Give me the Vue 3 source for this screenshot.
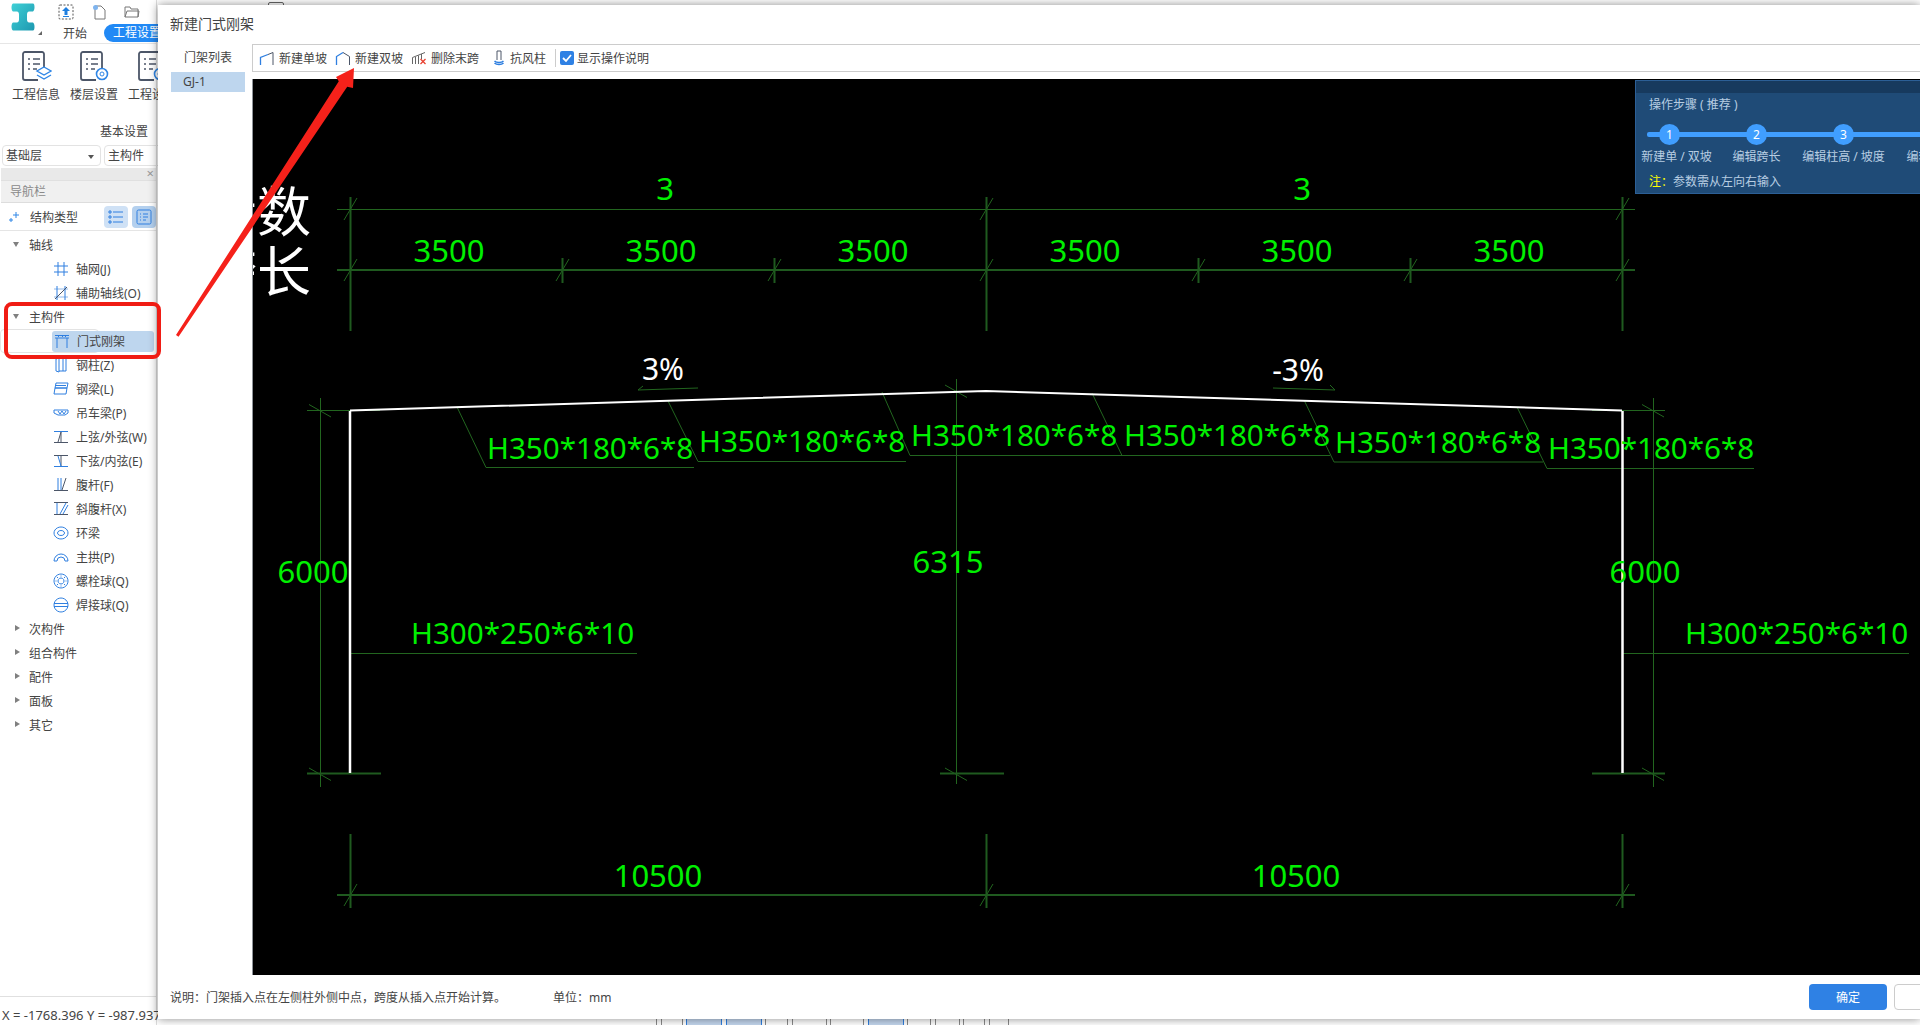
<template>
  <div class="app">
    <!-- 左侧主程序 -->
    <aside class="side">
      <div class="top">
        <div class="logo">
          <svg width="26" height="30" viewBox="0 0 26 29">
            <defs>
              <linearGradient id="lg" x1="0" y1="0" x2="1" y2="1">
                <stop offset="0" stop-color="#3fd0d6" />
                <stop offset="1" stop-color="#1d98b0" />
              </linearGradient>
            </defs>
            <path fill="url(#lg)" d="M3 1h20c2 0 2 7 0 8h-4c-1 0-2 1-2 3v5c0 2 1 3 2 3h4c2 1 2 8 0 8H3c-2-1-2-7 0-8h4c1 0 2-1 2-3v-5c0-2-1-3-2-3H3c-2-1-2-7 0-8z" />
          </svg>
          <i class="logo-arrow"></i>
        </div>
        <div class="top-right">
          <div class="quick">
            <svg width="16" height="16" viewBox="0 0 16 16">
              <rect x="1" y="1" width="14" height="14" rx="1" fill="none" stroke="#555" stroke-dasharray="2 1.5" />
              <path d="M8 3l4 4H9.500v4h-3V7H4z" fill="#1f7fe0" /><path d="M5 12.500h6" stroke="#1f7fe0" />
            </svg>
            <svg width="14" height="16" viewBox="0 0 14 16">
              <path d="M3 2h6l4 4v9H3z" fill="#fff" stroke="#777" /><circle cx="3.500" cy="3.500" r="2.500" fill="#7fb4ee" />
            </svg>
            <svg width="16" height="14" viewBox="0 0 16 14">
              <path d="M1 12V2h5l1 2h7v8zM1 12l2-6h12l-1 6" fill="#fff" stroke="#777" />
            </svg>
            <svg width="14" height="14" viewBox="0 0 14 14"><rect x="1" y="1" width="12" height="12" rx="1" fill="none" stroke="#777" /></svg>
          </div>
          <div class="tabs">
            <span class="tab">开始</span>
            <span class="tab active">工程设置</span>
          </div>
        </div>
      </div>

      <div class="ribbon">
        <div class="rib-row">
          <div class="rib-item" v-for="r in ribbon" :key="r.label">
            <svg width="32" height="32" viewBox="0 0 32 32">
              <path d="M24 22V4a2 2 0 0 0-2-2H5a2 2 0 0 0-2 2v24a2 2 0 0 0 2 2h13" fill="none" stroke="#4c5668" stroke-width="1.800" />
              <path d="M8 9h2M13 9h7M8 14h2M13 14h7M8 19h2M13 19h4" stroke="#4c5668" stroke-width="1.600" fill="none" />
              <path v-if="r.kind === 'layer'" d="M24 17l7 4-7 4-7-4zM17 25l7 4 7-4" fill="#fff" stroke="#2f86e6" stroke-width="1.400" />
              <g v-else>
                <circle cx="24" cy="24" r="5.500" fill="#fff" stroke="#2f86e6" stroke-width="1.600" />
                <circle cx="24" cy="24" r="2" fill="none" stroke="#2f86e6" />
              </g>
            </svg>
            <span>{{ r.label }}</span>
          </div>
        </div>
        <div class="rib-group">基本设置</div>
      </div>

      <div class="selects">
        <div class="sel first">基础层<i class="sel-arrow"></i></div>
        <div class="sel">主构件</div>
      </div>

      <div class="panel-close"><span>×</span></div>
      <div class="panel-title">导航栏</div>
      <div class="struct">
        <svg class="struct-icon" width="12" height="12" viewBox="0 0 12 12">
          <path d="M8 1v6M5 4h6M3 7v4M1 9h4" stroke="#2f86e6" fill="none" />
        </svg>
        <span class="struct-label">结构类型</span>
        <span class="view-btn">
          <svg width="16" height="14" viewBox="0 0 16 14">
            <path d="M5 2h10M5 7h10M5 12h10" stroke="#2f7fe0" fill="none" />
            <path d="M1 1h2v2H1zM1 6h2v2H1zM1 11h2v2H1z" fill="none" stroke="#2f7fe0" />
          </svg>
        </span>
        <span class="view-btn dark">
          <svg width="16" height="16" viewBox="0 0 16 16">
            <rect x="1" y="1" width="14" height="14" rx="1.500" fill="none" stroke="#2f7fe0" />
            <path d="M4 5h1M7 5h5M4 8h1M7 8h5M4 11h1M7 11h3" stroke="#2f7fe0" fill="none" />
          </svg>
        </span>
      </div>

      <ul class="tree">
        <li v-for="t in tree" :key="t.label" class="row" :class="{ child: t.icon, sel: t.selected }">
          <template v-if="t.icon">
            <svg class="ti" width="16" height="16" viewBox="0 0 16 16">
              <path v-for="(p, i) in icons[t.icon]" :key="i" :d="p[1]" :stroke="p[0]" fill="none" />
            </svg>
            <span>{{ t.label }}</span>
          </template>
          <template v-else>
            <i :class="t.open ? 'tri-down' : 'tri-right'"></i>
            <span>{{ t.label }}</span>
          </template>
        </li>
      </ul>

      <div class="status">X = -1768.396 Y = -987.937</div>
    </aside>

    <!-- 弹窗上下露出的主程序残边 -->
    <i class="peek"></i>
    <div class="dock">
      <i v-for="(d, i) in dock" :key="i" :class="{ on: d.on }" :style="{ width: d.w + 'px' }"></i>
    </div>

    <!-- 新建门式刚架 弹窗 -->
    <section class="modal">
      <header class="m-title">新建门式刚架</header>
      <div class="m-body">
        <div class="m-list">
          <div class="m-list-title">门架列表</div>
          <div class="m-list-item">GJ-1</div>
        </div>
        <div class="m-main">
          <div class="toolbar">
            <div class="tool first">
              <svg width="16" height="14" viewBox="0 0 16 14">
                <path d="M1.500 14V6.500L9 3.500" stroke="#2f7fe0" fill="none" stroke-width="1.300" />
                <path d="M9 3.500l5-2V14" stroke="#4c5668" fill="none" />
              </svg>
              <span>新建单坡</span>
            </div>
            <div class="tool">
              <svg width="16" height="14" viewBox="0 0 16 14">
                <path d="M1.500 14V5.500L8 1.500" stroke="#2f7fe0" fill="none" stroke-width="1.300" />
                <path d="M8 1.500l6.500 4V14" stroke="#4c5668" fill="none" />
              </svg>
              <span>新建双坡</span>
            </div>
            <div class="tool del">
              <svg width="16" height="14" viewBox="0 0 16 14">
                <path d="M1.500 13V6.500L14 1.500M4.500 13V6M7.500 13V4.500M10.500 8V3" stroke="#666" fill="none" />
                <path d="M9.500 8l5 5M14.500 8l-5 5" stroke="#e8402f" fill="none" stroke-width="1.300" />
              </svg>
              <span>删除末跨</span>
            </div>
            <div class="tool wind">
              <svg width="14" height="16" viewBox="0 0 14 16">
                <path d="M5 1h4M5 1v9M9 1v9" stroke="#4c5668" fill="none" />
                <path d="M2.500 11c2 2 7 2 9 0M2.500 13c2 2 7 2 9 0" stroke="#2f7fe0" fill="none" stroke-width="1.500" />
              </svg>
              <span>抗风柱</span>
            </div>
            <i class="tool-sep"></i>
            <label class="check">
              <svg width="14" height="14" viewBox="0 0 14 14">
                <rect width="14" height="14" rx="2" fill="#2f81e4" />
                <path d="M3 7l3 3 5-6" stroke="#fff" stroke-width="1.800" fill="none" />
              </svg>
              <span>显示操作说明</span>
            </label>
          </div>

          <div class="canvas">
            <svg class="cad" width="1667" height="896" viewBox="253 79 1667 896">
              <path v-for="(d, i) in thinLines" :key="'t' + i" :d="d" stroke="#22661f" fill="none" />
              <path v-for="(d, i) in dimLines" :key="'d' + i" :d="d" stroke="#1f5a1f" stroke-width="2" fill="none" />
              <path d="M350 410.500L986 391L1622 410.500" stroke="#fff" stroke-width="2" fill="none" />
              <path d="M350 411V773M1622.500 411V773" stroke="#fff" stroke-width="2.500" fill="none" />
              <text v-for="(t, i) in labels" :key="'l' + i" :class="t.anchor ? 'sec' : 'dim'" :x="t.x" :y="t.y" :text-anchor="t.anchor || 'middle'">{{ t.s }}</text>
              <text class="slope" x="663" y="380" text-anchor="middle">3%</text>
              <text class="slope" x="1298" y="381" text-anchor="middle">-3%</text>
              <text class="big" x="311" y="232" text-anchor="end">参数</text>
              <text class="big" x="311" y="292" text-anchor="end">跨长</text>
            </svg>

            <div class="steps">
              <div class="steps-bar"></div>
              <div class="steps-title">操作步骤 ( 推荐 )</div>
              <div class="steps-row">
                <div class="step" v-for="s in steps" :key="s.n">
                  <b class="num">{{ s.n }}</b>
                  <span class="step-label" :class="{ shift: s.n === 1 }">{{ s.label }}</span>
                </div>
              </div>
              <div class="steps-note"><em>注：</em>参数需从左向右输入</div>
            </div>
          </div>
        </div>
      </div>
      <footer class="m-foot">
        <span class="foot-note">说明：门架插入点在左侧柱外侧中点，跨度从插入点开始计算。</span>
        <span class="foot-unit">单位：mm</span>
        <button class="ok">确定</button>
        <button class="cancel"></button>
      </footer>
    </section>

    <!-- 红色标注 -->
    <svg class="mark" width="1920" height="1025" viewBox="0 0 1920 1025">
      <rect x="6" y="304" width="153" height="53" rx="6" fill="none" stroke="#f01c14" stroke-width="4" />
      <polygon points="176,335 338.800,81.200 336,77 354,68 353,88 347.200,86.800 178.500,336.700" fill="#f5211a" />
    </svg>
  </div>
</template>

<script setup>
const ribbon = [
  { label: '工程信息', kind: 'layer' },
  { label: '楼层设置', kind: 'gear' },
  { label: '工程设置', kind: 'gear' }
]

const dock = [
  { w: 35 }, { w: 22 }, { w: 36, on: true }, { w: 36, on: true }, { w: 23 }, { w: 35 },
  { w: 34 }, { w: 36, on: true }, { w: 24 }, { w: 25 }, { w: 22 }, { w: 20 }
]

const BLUE = '#2f7fe0'
const DARK = '#4c5668'

// 树形图标，每段 [颜色, 路径]
const icons = {
  grid: [[BLUE, 'M5 1v14M11 1v14M1 5h14M1 11h14']],
  aux: [['#8fb8ea', 'M1 4h14M1 12h14'], [BLUE, 'M4 1v14M12 1v14'], [DARK, 'M2 14L14 2']],
  portal: [[BLUE, 'M1 2.500h14M1 5h14M3 5v10M13 5v10M4 3.500h1M8 3.500h1M11 3.500h1']],
  column: [[BLUE, 'M3 2l3-1v14l-3-1zM6 1h7v13H6M10 1v13']],
  beam: [[BLUE, 'M3 2h12l-1 5H2l1-5M2 7h12l-1 6H1l1-6M3 4.500h10']],
  crane: [[BLUE, 'M1 5h14v3l-3 2H5L1 8zM5 6l2 3 2-3 2 3 2-3']],
  upper: [[BLUE, 'M1 2.500h14'], [DARK, 'M8 3v10M1 13.500h14M8 3L5 13']],
  lower: [[DARK, 'M1 2.500h14M8 3v10'], [BLUE, 'M1 13.500h14M8 13L5 3']],
  web: [[DARK, 'M1 13.500h14'], [BLUE, 'M5 1v12M8 1v12'], [DARK, 'M9 13l4-12']],
  diag: [[DARK, 'M1 1.500h14M1 13.500h14'], [BLUE, 'M4 2v11M7 13l6-11M10 13l5-9']],
  ring: [[BLUE, 'M8 2a7 6 0 1 0 .01 0zM8 5.500a3.500 2.500 0 1 0 .01 0z']],
  arch: [[BLUE, 'M1 12a7 7 0 0 1 14 0M4 12a4 4 0 0 1 8 0M1 12h3M12 12h3']],
  bolt: [[BLUE, 'M8 1a7 7 0 1 0 .01 0zM8 5a3 3 0 1 0 .01 0zM8 2.500v1M8 12.500v1M2.500 8h1M12.500 8h1M4 4l1 1M11 11l1 1M12 4l-1 1M4 12l1-1']],
  weld: [[BLUE, 'M8 1a7 7 0 1 0 .01 0zM1 6.500h14M1 9.500h14']]
}

const tree = [
  { label: '轴线', open: true },
  { label: '轴网(J)', icon: 'grid' },
  { label: '辅助轴线(O)', icon: 'aux' },
  { label: '主构件', open: true },
  { label: '门式刚架', icon: 'portal', selected: true },
  { label: '钢柱(Z)', icon: 'column' },
  { label: '钢梁(L)', icon: 'beam' },
  { label: '吊车梁(P)', icon: 'crane' },
  { label: '上弦/外弦(W)', icon: 'upper' },
  { label: '下弦/内弦(E)', icon: 'lower' },
  { label: '腹杆(F)', icon: 'web' },
  { label: '斜腹杆(X)', icon: 'diag' },
  { label: '环梁', icon: 'ring' },
  { label: '主拱(P)', icon: 'arch' },
  { label: '螺栓球(Q)', icon: 'bolt' },
  { label: '焊接球(Q)', icon: 'weld' },
  { label: '次构件' },
  { label: '组合构件' },
  { label: '配件' },
  { label: '面板' },
  { label: '其它' }
]

const steps = [
  { n: 1, label: '新建单 / 双坡' },
  { n: 2, label: '编辑跨长' },
  { n: 3, label: '编辑柱高 / 坡度' },
  { n: 4, label: '编辑截面' }
]

// 标注线，坐标按整页像素
const axes = [350, 562, 774, 986, 1198, 1410, 1622]
const slash = (x, y) => `M${x - 6.5} ${y + 11}L${x + 6.5} ${y - 11}`
const cross = (x, y) => `M${x - 11} ${y - 6}L${x + 11} ${y + 6.5}`

const thinLines = [
  'M337 209.500H1635',
  slash(350.5, 209),
  slash(986.5, 209),
  slash(1622.5, 209),
  ...axes.map(x => slash(x + 0.5, 270)),
  'M307 410.500H380',
  'M1592 410.500H1665',
  'M320.500 398V787',
  'M1653.500 398V787',
  'M956.500 379V784',
  cross(320, 410.5),
  cross(320, 774),
  cross(1653, 410.5),
  cross(1653, 774),
  cross(956, 391),
  cross(956, 774),
  slash(350.5, 895),
  slash(986.5, 895),
  slash(1622.5, 895),
  // 引出线
  'M457 407L486 467.500H694',
  'M668 401L698 461.500H906',
  'M882 392L910 455.500H1122',
  'M1092 393L1122 455.500H1330',
  'M1304 400L1334 462H1543',
  'M1517 407L1547 468.500H1754',
  'M350 653.500H637',
  'M1622 653.500H1909',
  'M638 390L698 388M638 390L643 386',
  'M1273 388L1335 390M1335 390L1330 385'
]

const dimLines = [
  'M337 270H1635',
  'M350.500 197V331',
  'M986.500 197V331',
  'M1622.500 197V331',
  ...axes.slice(1, 3).concat(axes.slice(4, 6)).map(x => `M${x + 0.5} 258V283`),
  'M307 773.500H381',
  'M1592 773.500H1665',
  'M940 773.500H1004',
  'M337 895H1635',
  'M350.500 834V908',
  'M986.500 834V908',
  'M1622.500 834V908'
]

const labels = [
  { s: '3', x: 665, y: 200 },
  { s: '3', x: 1302, y: 200 },
  ...[449, 661, 873, 1085, 1297, 1509].map(x => ({ s: '3500', x, y: 262 })),
  { s: 'H350*180*6*8', x: 487, y: 459, anchor: 'start' },
  { s: 'H350*180*6*8', x: 699, y: 452, anchor: 'start' },
  { s: 'H350*180*6*8', x: 911, y: 446, anchor: 'start' },
  { s: 'H350*180*6*8', x: 1124, y: 446, anchor: 'start' },
  { s: 'H350*180*6*8', x: 1335, y: 453, anchor: 'start' },
  { s: 'H350*180*6*8', x: 1548, y: 459, anchor: 'start' },
  { s: '6000', x: 313, y: 583 },
  { s: '6315', x: 948, y: 573 },
  { s: '6000', x: 1645, y: 583 },
  { s: 'H300*250*6*10', x: 411, y: 644, anchor: 'start' },
  { s: 'H300*250*6*10', x: 1685, y: 644, anchor: 'start' },
  { s: '10500', x: 658, y: 887 },
  { s: '10500', x: 1296, y: 887 }
]
</script>

<style scoped>
.app {
  position: relative;
  width: 1920px;
  height: 1025px;
  overflow: hidden;
  background: #fff;
  font-family: "Noto Sans", "Noto Sans CJK SC", sans-serif;
  font-size: 12px;
  color: #444;
}
.side {
  width: 157px;
  height: 1025px;
  display: flex;
  flex-direction: column;
  border-right: 1px solid #ddd;
  box-sizing: border-box;
}
.top {
  height: 44px;
  display: flex;
  border-bottom: 1px solid #e6e6e6;
  box-sizing: border-box;
  flex: none;
}
.logo {
  width: 57px;
  flex: none;
  padding: 2px 0 0 10px;
  box-sizing: border-box;
  position: relative;
}
.logo-arrow {
  position: absolute;
  left: 38px;
  top: 31px;
  border-right: 4px solid #666;
  border-top: 4px solid transparent;
}
.quick {
  display: flex;
  align-items: center;
  gap: 18px;
  height: 22px;
  padding: 1px 0 0 1px;
}
.tabs {
  display: flex;
  align-items: center;
  height: 19px;
}
.tab {
  width: 36px;
  font-size: 12px;
  text-align: center;
  flex: none;
}
.tab.active {
  margin-left: 11px;
  width: 66px;
  height: 18px;
  line-height: 18px;
  border-radius: 9px;
  background: #2189f5;
  color: #fff;
}
.ribbon {
  height: 98px;
  flex: none;
  display: flex;
  flex-direction: column;
}
.rib-row {
  display: flex;
  padding: 6px 0 0 12px;
  gap: 10px;
}
.rib-item {
  width: 48px;
  flex: none;
  display: flex;
  flex-direction: column;
  align-items: center;
  gap: 3px;
  white-space: nowrap;
}
.rib-group {
  margin-top: 19px;
  text-align: right;
  padding-right: 8px;
}
.selects {
  display: flex;
  gap: 3px;
  padding: 3px 0 2px 2px;
  flex: none;
}
.sel {
  width: 99px;
  height: 21px;
  line-height: 19px;
  padding-left: 3px;
  border: 1px solid #e3e3e3;
  border-radius: 4px;
  box-sizing: border-box;
  position: relative;
  flex: none;
}
.sel-arrow {
  position: absolute;
  right: 6px;
  top: 9px;
  border: 3px solid transparent;
  border-top: 4px solid #555;
  border-bottom: 0;
}
.panel-close {
  height: 12px;
  background: #e9e9e9;
  margin-left: 1px;
  text-align: right;
  padding-right: 2px;
  line-height: 11px;
  color: #999;
  font-size: 13px;
  flex: none;
}
.panel-title {
  height: 21px;
  line-height: 21px;
  padding-left: 9px;
  background: #f0f0f0;
  margin-left: 1px;
  color: #8a8a8a;
  border-top: 1px solid #e0e0e0;
  border-bottom: 1px solid #ddd;
  flex: none;
}
.struct {
  height: 27px;
  display: flex;
  align-items: center;
  padding-left: 8px;
  border-bottom: 1px solid #e5e5e5;
  flex: none;
}
.struct-icon {
  flex: none;
}
.struct-label {
  margin-left: 10px;
  width: 74px;
  flex: none;
}
.view-btn {
  width: 24px;
  height: 22px;
  background: #cfe1f5;
  border-radius: 4px;
  display: flex;
  align-items: center;
  justify-content: center;
  margin-right: 4px;
  flex: none;
}
.view-btn.dark {
  background: #b4d0ee;
  margin-right: 0;
}
.tree {
  list-style: none;
  margin: 0;
  padding: 2px 0 0;
  flex: 1;
}
.row {
  height: 24px;
  display: flex;
  align-items: center;
  padding-left: 12px;
  white-space: nowrap;
}
.row i {
  width: 17px;
  flex: none;
  position: relative;
  height: 8px;
}
.tri-down::before {
  content: "";
  position: absolute;
  left: 1px;
  top: 1px;
  border: 3.500px solid transparent;
  border-top: 5px solid #808080;
  border-bottom: 0;
}
.tri-right::before {
  content: "";
  position: absolute;
  left: 3px;
  top: 0;
  border: 3.500px solid transparent;
  border-left: 5px solid #808080;
  border-right: 0;
}
.row.child {
  padding-left: 53px;
  position: relative;
}
.ti {
  margin-right: 7px;
  flex: none;
}
.row.sel::before {
  content: "";
  position: absolute;
  left: 51px;
  width: 102px;
  height: 21px;
  background: #bed6ee;
  border-radius: 3px;
  z-index: 0;
}
.row.sel > * {
  position: relative;
}
.status {
  height: 28px;
  line-height: 36px;
  padding-left: 2px;
  font-size: 13px;
  border-top: 1px solid #e0e0e0;
  white-space: nowrap;
  flex: none;
}
.peek {
  position: absolute;
  left: 268px;
  top: 2px;
  width: 16px;
  height: 8px;
  border: 1px solid #666;
  border-radius: 2px;
  box-sizing: border-box;
}
.dock {
  position: absolute;
  left: 622px;
  bottom: 0;
  height: 6px;
  display: flex;
  gap: 3.500px;
}
.dock i {
  height: 6px;
  box-sizing: border-box;
  border-left: 1px solid #8a8a8a;
  border-right: 1px solid #8a8a8a;
  flex: none;
}
.dock i:first-child {
  border-left: 0;
}
.dock i.on {
  background: #c3d6ee;
  border-color: #2f7fe0;
}
.modal {
  position: absolute;
  left: 158px;
  top: 5px;
  width: 1762px;
  height: 1014px;
  background: #fff;
  box-shadow: 0 0 9px rgba(0, 0, 0, 0.45);
  display: flex;
  flex-direction: column;
}
.m-title {
  height: 39px;
  line-height: 38px;
  padding-left: 12px;
  font-size: 14px;
  flex: none;
}
.m-body {
  flex: 1;
  display: flex;
  min-height: 0;
}
.m-list {
  width: 94px;
  flex: none;
  padding: 0 0 0 13px;
  box-sizing: border-box;
}
.m-list-title {
  height: 28px;
  line-height: 27px;
  text-align: center;
  width: 74px;
}
.m-list-item {
  width: 74px;
  height: 20px;
  line-height: 20px;
  padding-left: 12px;
  background: #bed6ee;
  box-sizing: border-box;
}
.m-main {
  flex: 1;
  min-width: 0;
  display: flex;
  flex-direction: column;
}
.toolbar {
  height: 28px;
  flex: none;
  display: flex;
  align-items: center;
  border: 1px solid #ccc;
  border-right: 0;
  box-sizing: border-box;
  margin-bottom: 7px;
}
.tool {
  display: flex;
  align-items: center;
  gap: 4px;
  width: 76px;
  flex: none;
  padding-left: 6px;
  box-sizing: border-box;
}
.tool.del {
  width: 82px;
}
.tool.wind {
  width: 68px;
  padding-left: 5px;
}
.tool-sep {
  width: 1px;
  height: 18px;
  background: #ccc;
  margin-right: 4px;
  flex: none;
}
.check {
  display: flex;
  align-items: center;
  gap: 3px;
}
.canvas {
  flex: 1;
  min-height: 0;
  background: #000;
  border-left: 1px solid #8f949a;
  position: relative;
  overflow: hidden;
  height: 896px;
}
.cad {
  display: block;
  position: absolute;
  left: 0;
  top: 0;
}
.dim {
  fill: #00f000;
  font-size: 31px;
  font-family: "Noto Sans", sans-serif;
}
.sec {
  fill: #00f000;
  font-size: 29.600px;
  font-family: "Noto Sans", sans-serif;
}
.slope {
  fill: #fff;
  font-size: 30px;
  font-family: "Noto Sans", sans-serif;
}
.big {
  fill: #fff;
  font-size: 54px;
  font-family: "Noto Sans CJK SC", sans-serif;
}
.steps {
  position: absolute;
  left: 1382px;
  top: 1px;
  width: 290px;
  height: 114px;
  background: #1f4b77;
  border: 1px solid #2c5f96;
  box-sizing: border-box;
  color: #b7cde2;
  overflow: hidden;
}
.steps-bar {
  height: 12px;
  background: #173a5e;
}
.steps-title {
  padding-left: 13px;
  height: 31px;
  line-height: 23px;
}
.steps-row {
  display: flex;
  margin-left: -10px;
  position: relative;
}
.steps-row::before {
  content: "";
  position: absolute;
  left: 21px;
  right: 0;
  top: 8px;
  height: 5px;
  background: #409eff;
  border-radius: 2px;
}
.step {
  width: 87px;
  flex: none;
  display: flex;
  flex-direction: column;
  align-items: center;
  position: relative;
}
.num {
  width: 21px;
  height: 21px;
  line-height: 21px;
  border-radius: 50%;
  background: #409eff;
  color: #fff;
  text-align: center;
  font-weight: 400;
}
.step-label {
  white-space: nowrap;
  margin-top: 3px;
  line-height: 18px;
}
.step-label.shift {
  margin-left: 14px;
}
.steps-note {
  padding-left: 13px;
  margin-top: 7px;
  line-height: 18px;
}
.steps-note em {
  color: #ff0;
  font-style: normal;
}
.m-foot {
  height: 44px;
  flex: none;
  display: flex;
  align-items: center;
  padding-left: 12px;
}
.foot-note {
  width: 383px;
  flex: none;
}
.foot-unit {
  width: 1256px;
  flex: none;
}
.ok {
  width: 78px;
  height: 26px;
  background: #2f81e4;
  color: #fff;
  border: 0;
  border-radius: 4px;
  font: inherit;
  flex: none;
}
.cancel {
  width: 60px;
  height: 26px;
  margin-left: 7px;
  background: #fff;
  border: 1px solid #ccc;
  border-radius: 4px;
  flex: none;
}
.mark {
  position: absolute;
  left: 0;
  top: 0;
  pointer-events: none;
}
</style>

<style>
html, body {
  margin: 0;
  background: #fff;
  overflow: hidden;
}
</style>
